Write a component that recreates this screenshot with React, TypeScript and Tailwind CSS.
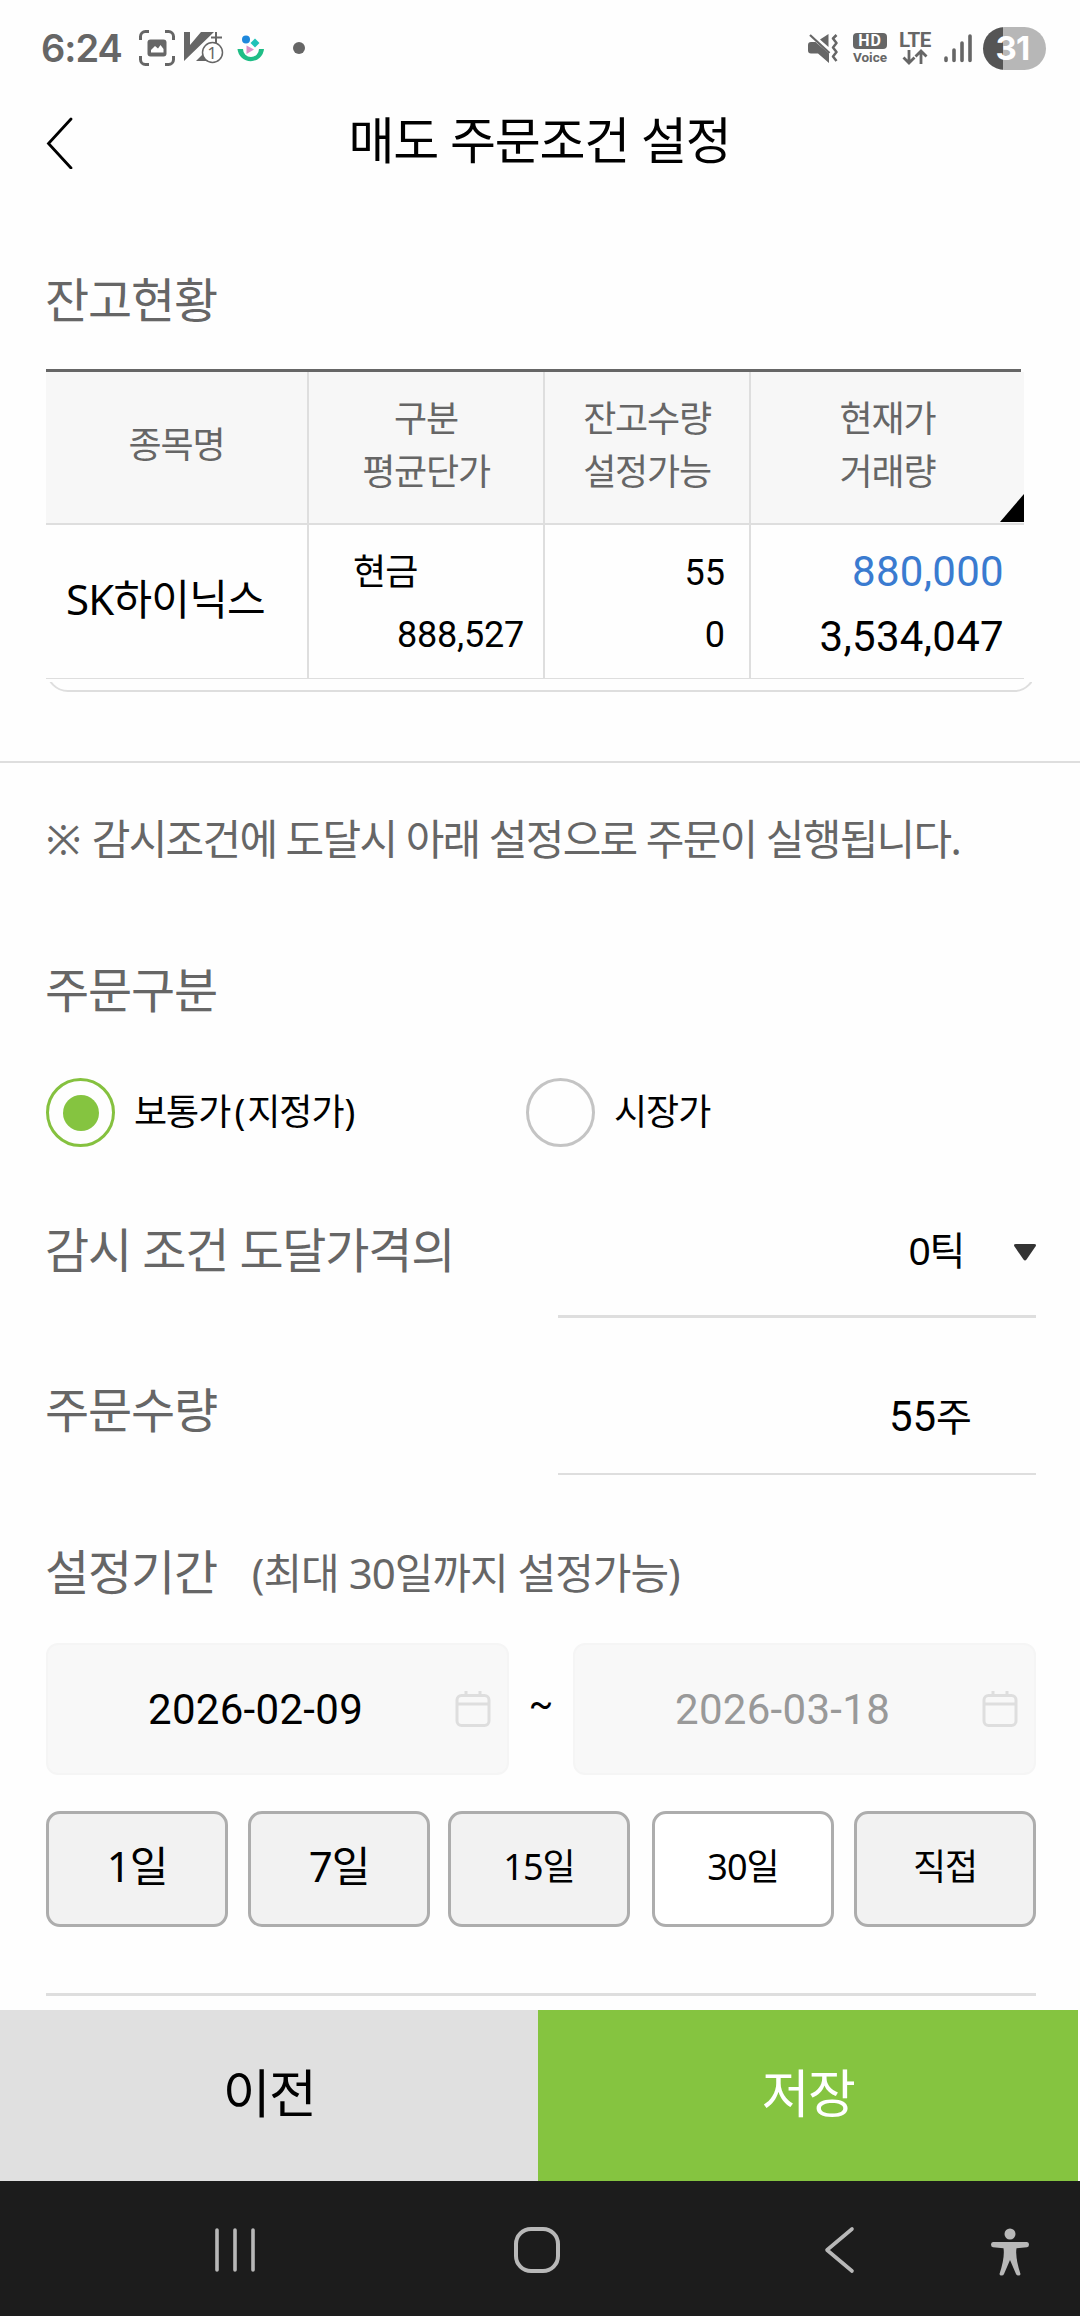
import type { ReactNode } from "react";

const holdingHeaders = [
  ["종목명"],
  ["구분", "평균단가"],
  ["잔고수량", "설정가능"],
  ["현재가", "거래량"],
];

const periods = [
  { label: "1일", style: "pb-1.5 text-[42px] bg-[#f2f2f2]" },
  { label: "7일", style: "ml-5 pb-1.5 text-[42px] bg-[#f2f2f2]" },
  { label: "15일", style: "ml-[18px] pb-1 text-[36px] bg-[#f2f2f2]" },
  { label: "30일", style: "ml-[22px] pb-1 text-[36px] bg-white" },
  { label: "직접", style: "ml-5 pb-1 text-[36px] bg-[#f2f2f2]" },
];

const StatusBar = () => {
  return (
    <div className="flex h-24 items-center pl-[41px] pr-[34px] text-[#666]">
      <p className="w-[98px] font-['Inter',sans-serif] text-[38px] font-semibold leading-none tracking-[-1px]">
        6:24
      </p>
      {/* screen capture */}
      <svg width="36" height="36" viewBox="0 0 36 36" fill="none">
        <path
          d="M1.500 10V6.500a5 5 0 0 1 5-5H10M26 1.500h3.500a5 5 0 0 1 5 5V10M34.500 26v3.500a5 5 0 0 1-5 5H26M10 34.500H6.500a5 5 0 0 1-5-5V26"
          stroke="currentColor"
          strokeWidth="3"
        />
        <rect x="8.500" y="9.500" width="19" height="17" rx="3" fill="currentColor" />
        <path d="M12 22.500v-2.500l4-4 3 2.500 2.500-3.500 3 4v3.500z" fill="white" />
      </svg>
      {/* brokerage notice */}
      <svg className="ml-[9px]" width="40" height="34" viewBox="0 0 40 34">
        <path d="M0 1h6v13L17 1h13L0 30z" fill="currentColor" />
        <path d="M12 30l9-9 6 9z" fill="currentColor" />
        <path d="M32 1v11M27 6.500h11" stroke="currentColor" strokeWidth="2" />
        <circle cx="28.500" cy="21.500" r="10" fill="white" stroke="currentColor" strokeWidth="1.500" />
        <text x="28" y="27.500" textAnchor="middle" fontSize="17" fontFamily="Noto Sans" fill="#666">
          1
        </text>
      </svg>
      <svg className="ml-[13px]" width="28" height="28" viewBox="0 0 28 28">
        <circle cx="9" cy="5.500" r="4" fill="#1e88dc" />
        <path d="M18 4.500l4.500 4.500-4.500 4.500-4.500-4.500z" fill="#1fc2b8" />
        <path d="M9.500 11.500l7.500 4-7.500 4.500z" fill="#dd8fc6" />
        <path d="M0.500 15h5.500a8 8 0 0 0 16 0h5a13.300 13.300 0 0 1-26.500 0z" fill="#1fbd86" />
      </svg>
      <div className="ml-7 size-3 rounded-full bg-[#666]" />

      <div className="ml-auto flex items-center">
        {/* muted, vibrating */}
        <svg width="30" height="30" viewBox="0 0 30 30" fill="currentColor">
          <path d="M0 12q0-3 3-3h4.500L21 20.500V30L10 20.500H3q-3 0-3-3z" />
          <path d="M12 6.500L20.500 1v13z" />
          <path d="M2 2l19.500 18" stroke="currentColor" strokeWidth="2.200" />
          <path
            d="M28.500 2l-3.500 3.500 3.500 4.500-3.500 4.500 3.500 4.500-3.500 4.500 3.500 4.500"
            fill="none"
            stroke="currentColor"
            strokeWidth="2.500"
            strokeLinejoin="round"
          />
        </svg>
        <div className="ml-[15px] flex w-[34px] flex-col items-center">
          <span className="flex h-4 w-[34px] items-center justify-center rounded bg-[#666] font-['Roboto',sans-serif] text-[16px] font-bold leading-none tracking-[1px] text-white">
            HD
          </span>
          <span className="mt-0.5 font-['Roboto',sans-serif] text-[13.5px] font-bold leading-[13px]">
            Voice
          </span>
        </div>
        <div className="ml-3 flex w-8 flex-col items-center">
          <span className="h-[17px] font-['Roboto',sans-serif] text-[20.5px] font-bold leading-[17px] tracking-[-0.3px]">
            LTE
          </span>
          <svg width="26" height="16" viewBox="0 0 26 16" fill="none" stroke="currentColor" strokeWidth="2.800">
            <path d="M7 1v13M1.500 8.500L7 14l5.500-5.500M19 15V2M13.500 7.500L19 2l5.500 5.500" />
          </svg>
        </div>
        <svg className="ml-[13px]" width="28" height="30" viewBox="0 0 28 30" stroke="currentColor" strokeWidth="3.600" strokeLinecap="round">
          <path d="M2 25v2.500M10 17v10.500M18 10v17.500M26 3v24.500" />
        </svg>
        <div className="ml-[11px] flex h-[43px] w-[63px] items-center justify-center rounded-full bg-[linear-gradient(90deg,#555_20px,#b7b7b7_20px)] pr-1 font-['Inter',sans-serif] text-[33px] font-bold leading-none tracking-[-0.8px] text-white">
          31
        </div>
      </div>
    </div>
  );
};

const SectionTitle = ({ children }: { children: ReactNode }) => (
  <h2 className="ml-[-1px] h-[60px] whitespace-nowrap text-[48px] leading-[60px] tracking-[-1.2px] text-[#666]">
    {children}
  </h2>
);

const Holdings = () => {
  return (
    <div className="relative mt-[39px] h-[323px] w-[988px]">
      <div className="h-[3px] w-[975px] bg-[#666]" />
      <div className="grid w-[978px] grid-cols-[263px_236px_206px_273px]">
        {holdingHeaders.map((lines, i) => (
          <div
            key={i}
            className={`relative flex h-[153px] flex-col items-center justify-center border-b-2 border-[#dedede] bg-[#f7f7f7] pb-1.5 text-[36px] leading-[53px] tracking-[-1.2px] text-[#666] ${
              i < 3 ? "border-r-2" : ""
            }`}
          >
            {lines.map((line) => (
              <p key={line}>{line}</p>
            ))}
            {i === 3 && (
              <svg className="absolute right-0 bottom-px" width="24" height="28" viewBox="0 0 24 28">
                <path d="M24 0v28H0z" />
              </svg>
            )}
          </div>
        ))}
        <div className="flex h-[154px] items-center border-r-2 border-b border-[#dedede] pb-1.5 pl-5 text-[42px] leading-none tracking-[-0.8px] whitespace-nowrap">
          SK하이닉스
        </div>
        <div className="flex h-[154px] flex-col border-r-2 border-b border-[#dedede] pt-[17px] pl-[44px] pr-[19px] text-[36px] leading-[60px] tracking-[-0.8px]">
          <p className="h-[63px]">현금</p>
          <p className="text-right font-['Roboto',sans-serif] tracking-[-0.2px]">888,527</p>
        </div>
        <div className="h-[154px] border-r-2 border-b border-[#dedede] pt-[18px] pr-6 text-right font-['Roboto',sans-serif] text-[36px] leading-[61px]">
          <p>55</p>
          <p className="pt-px">0</p>
        </div>
        <div className="h-[154px] border-b border-[#dedede] pt-[14px] pr-5 text-right font-['Roboto',sans-serif] text-[42px] leading-[65px] tracking-[0.3px]">
          <p className="text-[#3a7bd0]">880,000</p>
          <p>3,534,047</p>
        </div>
      </div>
      {/* bottom edge of the rounded frame around the table */}
      <div className="absolute bottom-0 left-[2px] h-[10px] w-[984px] overflow-hidden">
        <div className="absolute bottom-0 left-[-2px] h-12 w-[990px] rounded-[22px] border-2 border-[#dedede]" />
      </div>
    </div>
  );
};

const Radio = ({ checked, children }: { checked?: boolean; children: ReactNode }) => (
  <label className="flex w-[480px] items-center">
    <span
      className={`flex size-[69px] items-center justify-center rounded-full border-3 ${
        checked ? "border-[#85c13f]" : "border-[#c4c4c4]"
      }`}
    >
      {checked && <span className="size-9 rounded-full bg-[#85c440]" />}
    </span>
    <span className="ml-[19px] pb-0.5 text-[36px] leading-none tracking-[-1px]">{children}</span>
  </label>
);

const DateField = ({ value, color }: { value: string; color: string }) => (
  <div className="flex h-[132px] w-[463px] items-center rounded-xl border-2 border-[#f5f5f5] bg-[#f8f8f8]">
    <p
      className={`ml-[100px] w-[307px] pt-0.5 font-['Roboto',sans-serif] text-[42px] leading-none tracking-[0.3px] ${color}`}
    >
      {value}
    </p>
    <svg width="36" height="38" viewBox="0 0 36 38" fill="none" stroke="#dedede" strokeWidth="3">
      <rect x="2" y="5.500" width="32" height="30" rx="4.500" />
      <path d="M2 14h32M11 1v4M25 1v4" />
    </svg>
  </div>
);

const NavBar = () => {
  return (
    <div className="h-[135px] bg-[#1c1c1c]">
      <div className="flex h-[137px] items-center pl-[214px] text-[#b8b8b8]">
        <svg width="42" height="46" viewBox="0 0 42 46" stroke="currentColor" strokeWidth="3.600" strokeLinecap="round">
          <path d="M3 3v40M21 3v40M39 3v40" />
        </svg>
        <div className="ml-[258px] size-[46px] rounded-[17px] border-4 border-[#b8b8b8]" />
        <svg className="ml-[263px]" width="32" height="48" viewBox="0 0 32 48" fill="none" stroke="currentColor" strokeWidth="3.600" strokeLinecap="round" strokeLinejoin="round">
          <path d="M29 3L4 24l25 21" />
        </svg>
        <svg className="mt-1 ml-[135px]" width="40" height="50" viewBox="0 0 40 50" fill="currentColor">
          <circle cx="20" cy="7" r="5.500" />
          <path d="M3 15h34q2 0 2 2.500t-2 2.800l-10.500 1q-1.500 8.700 4 25.700q0 1.500-2 1.500t-2.500-1.500L20 33l-6 14q-.5 1.500-2.500 1.500t-2-1.500q5.500-17 4-25.700L3 20.300Q1 20 1 17.500T3 15z" />
        </svg>
      </div>
    </div>
  );
};

export default function App() {
  return (
    <div className="h-[2316px] w-[1080px] overflow-hidden bg-[#fefefe] font-['Noto_Sans','Noto_Sans_CJK_KR',sans-serif] text-black">
      <StatusBar />

      <header className="flex h-[90px] items-center pl-[46px]">
        <svg className="mt-[3px]" width="28" height="52" viewBox="0 0 28 52" fill="none" stroke="currentColor" strokeWidth="2.800" strokeLinecap="round">
          <path d="M25 2L2.500 26.500 25 51" />
        </svg>
        <h1 className="mr-[75px] flex-1 pb-0.5 text-center text-[50px] leading-none tracking-[-1.2px]">
          매도 주문조건 설정
        </h1>
      </header>

      <section className="mt-[84px] pl-[46px]">
        <SectionTitle>잔고현황</SectionTitle>
        <Holdings />
      </section>

      <div className="mt-[69px] h-0.5 bg-[#dedede]" />

      <main className="h-[1247px] px-[46px] pr-[44px]">
        <p className="pt-[46px] pb-0.5 text-[42px] leading-[60px] tracking-[-1.7px] whitespace-nowrap text-[#666]">
          <span className="mr-[3px]">※</span> 감시조건에 도달시 아래 설정으로 주문이 실행됩니다.
        </p>

        <div className="mt-[89px]">
          <SectionTitle>주문구분</SectionTitle>
        </div>
        <div className="mt-[58px] flex">
          <Radio checked>
            보통가<span className="mr-[3px] ml-1">(</span>지정가<span className="ml-px">)</span>
          </Radio>
          <Radio>시장가</Radio>
        </div>

        <div className="mt-[73px] flex h-[98px] justify-between">
          <SectionTitle>감시 조건 도달가격의</SectionTitle>
          <div className="flex w-[478px] items-start justify-end border-b-3 border-[#dedede] text-[39px] leading-[60px] tracking-[-1.3px]">
            0틱
            <svg className="mt-[24px] ml-[50px]" width="22" height="17" viewBox="0 0 22 17">
              <path d="M2 0h18q3 0 1.500 2.500l-9 13q-1.500 2-3 0l-9-13Q-1 0 2 0z" fill="#333" />
            </svg>
          </div>
        </div>

        <div className="mt-[62px] flex h-[95px] justify-between">
          <SectionTitle>주문수량</SectionTitle>
          <p className="w-[478px] border-b-2 border-[#dedede] pr-[64px] text-right font-['Roboto','Noto_Sans_CJK_KR',sans-serif] text-[42px] leading-[74px]">
            55<span className="text-[39px]">주</span>
          </p>
        </div>

        <div className="mt-[67px] flex">
          <SectionTitle>설정기간</SectionTitle>
          <p className="ml-[35px] h-[60px] text-[42px] leading-[62px] tracking-[-1px] whitespace-nowrap text-[#666]">
            (최대 30일까지 설정가능)
          </p>
        </div>
        <div className="mt-[41px] flex items-center justify-between">
          <DateField value="2026-02-09" color="text-black" />
          <span className="pb-2.5 font-['Roboto',sans-serif] text-[36px] leading-none">~</span>
          <DateField value="2026-03-18" color="text-[#999]" />
        </div>

        <div className="mt-9 flex">
          {periods.map((p) => (
            <button
              key={p.label}
              className={`h-[116px] w-[182px] rounded-[14px] border-3 border-[#adadad] leading-none tracking-[-1px] ${p.style}`}
            >
              {p.label}
            </button>
          ))}
        </div>
        <div className="mt-[66px] h-[3px] bg-[#dedede]" />
      </main>

      <div className="flex h-[171px] pr-0.5 text-[52px] tracking-[-1.5px]">
        <button className="w-[538px] bg-[#e0e0e0] pb-1.5">이전</button>
        <button className="flex-1 bg-[#85c440] pb-1.5 text-white">저장</button>
      </div>
      <NavBar />
    </div>
  );
}
